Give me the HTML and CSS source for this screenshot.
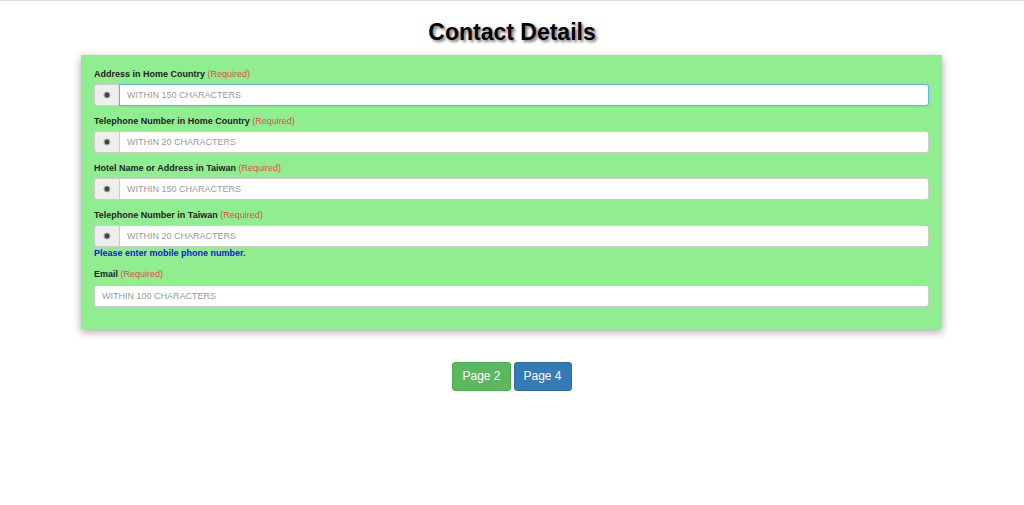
FILE: index.html
```html
<!DOCTYPE html>
<html>
<head>
<meta charset="utf-8">
<link rel="stylesheet" href="styles.css">
</head>
<body>
<div class="topline"></div>
<h1 class="title">Contact Details</h1>
<div class="panel">
  <div class="group">
    <div class="label">Address in Home Country <span class="req">(Required)</span></div>
    <div class="igroup">
      <span class="addon"><svg width="8" height="8" viewBox="0 0 10 10"><path d="M5 0.8v8.4M0.8 5h8.4M2 2l6 6M8 2l-6 6" stroke="#444" stroke-width="1.5"/><circle cx="5" cy="5" r="2.6" fill="#444"/></svg></span>
      <div class="input focus">WITHIN 150 CHARACTERS</div>
    </div>
  </div>
  <div class="group">
    <div class="label">Telephone Number in Home Country <span class="req">(Required)</span></div>
    <div class="igroup">
      <span class="addon"><svg width="8" height="8" viewBox="0 0 10 10"><path d="M5 0.8v8.4M0.8 5h8.4M2 2l6 6M8 2l-6 6" stroke="#444" stroke-width="1.5"/><circle cx="5" cy="5" r="2.6" fill="#444"/></svg></span>
      <div class="input">WITHIN 20 CHARACTERS</div>
    </div>
  </div>
  <div class="group">
    <div class="label">Hotel Name or Address in Taiwan <span class="req">(Required)</span></div>
    <div class="igroup">
      <span class="addon"><svg width="8" height="8" viewBox="0 0 10 10"><path d="M5 0.8v8.4M0.8 5h8.4M2 2l6 6M8 2l-6 6" stroke="#444" stroke-width="1.5"/><circle cx="5" cy="5" r="2.6" fill="#444"/></svg></span>
      <div class="input">WITHIN 150 CHARACTERS</div>
    </div>
  </div>
  <div class="group">
    <div class="label">Telephone Number in Taiwan <span class="req">(Required)</span></div>
    <div class="igroup">
      <span class="addon"><svg width="8" height="8" viewBox="0 0 10 10"><path d="M5 0.8v8.4M0.8 5h8.4M2 2l6 6M8 2l-6 6" stroke="#444" stroke-width="1.5"/><circle cx="5" cy="5" r="2.6" fill="#444"/></svg></span>
      <div class="input">WITHIN 20 CHARACTERS</div>
    </div>
    <div class="help">Please enter mobile phone number.</div>
  </div>
  <div class="group last">
    <div class="label email">Email <span class="req">(Required)</span></div>
    <div class="input solo">WITHIN 100 CHARACTERS</div>
  </div>
</div>
<div class="buttons">
  <span class="btn green">Page 2</span>
  <span class="btn blue">Page 4</span>
</div>
</body>
</html>
```

FILE: styles.css
```css
html, body {
  margin: 0;
  padding: 0;
  background: #fff;
  font-family: "Liberation Sans", Arial, sans-serif;
  color: #333;
}
.topline {
  height: 1px;
  background: #ddd;
}
.title {
  margin: 17px 0 0;
  height: 37px;
  text-align: center;
  font-size: 23px;
  line-height: 28px;
  font-weight: bold;
  color: #000;
  text-shadow: 2px 2px 3px #777;
}
.panel {
  width: 835px;
  margin: 0 0 0 81px;
  padding: 13px 13px 22px;
  background: #90ee90;
  box-shadow: 0 3px 8px rgba(0,0,0,0.35);
}
.group {
  margin-bottom: 9px;
}
.label {
  font-size: 9px;
  font-weight: bold;
  line-height: 12px;
  color: #222;
  margin-bottom: 4px;
}
.label.email {
  margin-bottom: 5px;
}
.req {
  color: #e04a4a;
  font-weight: normal;
}
.igroup {
  display: flex;
  height: 22px;
}
.addon {
  width: 25px;
  flex: none;
  display: flex;
  align-items: center;
  justify-content: center;
  background: #eee;
  border: 1px solid #ccc;
  border-right: none;
  border-radius: 3px 0 0 3px;
  box-sizing: border-box;
}
.input {
  flex: 1;
  box-sizing: border-box;
  height: 22px;
  background: #fff;
  border: 1px solid #ccc;
  border-radius: 0 3px 3px 0;
  font-size: 9px;
  color: #999;
  line-height: 20px;
  padding-left: 7px;
}
.input.focus {
  border-color: #66afe9;
  box-shadow: 0 0 2px rgba(102,175,233,0.6);
}
.input.solo {
  border-radius: 3px;
}
.help {
  font-size: 9px;
  font-weight: bold;
  color: #1010ee;
  line-height: 11px;
  margin-top: 1px;
}
.group.last {
  margin-bottom: 0;
}
.buttons {
  display: flex;
  justify-content: center;
  gap: 3px;
  margin-top: 33px;
}
.btn {
  display: inline-block;
  box-sizing: border-box;
  height: 29px;
  line-height: 27px;
  padding: 0 9px;
  font-size: 12px;
  color: #fff;
  border-radius: 3px;
  border: 1px solid transparent;
}
.btn.green {
  background: #5cb85c;
  border-color: #4cae4c;
}
.btn.blue {
  background: #337ab7;
  border-color: #2e6da4;
}
```
